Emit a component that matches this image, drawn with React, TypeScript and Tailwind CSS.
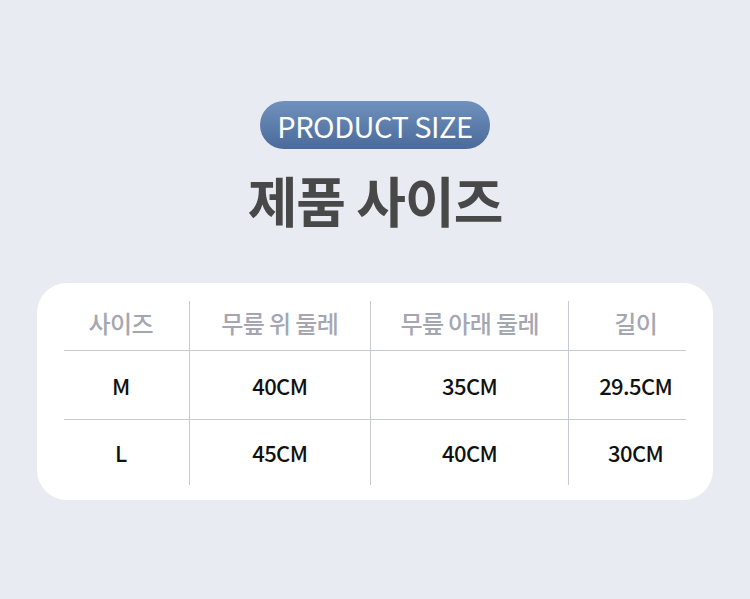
import React from 'react';

const rows = [
  ['M', '40CM', '35CM', '29.5CM'],
  ['L', '45CM', '40CM', '30CM'],
];

const headers = ['사이즈', '무릎 위 둘레', '무릎 아래 둘레', '길이'];

// column widths follow the divider positions in the design
const colClass = ['w-[125px] pr-[11px]', 'w-[182px]', 'w-[199px]', 'w-[118px] pl-[16px]'];

const App: React.FC = () => {
  return (
    <div
      className="w-[750px] h-[599px] bg-[#e9ebf2] flex flex-col items-center pt-[101px]"
      style={{ fontFamily: '"Noto Sans CJK KR", "Noto Sans", sans-serif' }}
    >
      <div className="h-[48px] w-[230px] rounded-full bg-gradient-to-b from-[#7191bd] to-[#4a6a9a] flex items-center justify-center">
        <span className="text-white text-[29px] leading-none tracking-[-0.5px]">PRODUCT SIZE</span>
      </div>

      <h1 className="mt-[19px] text-[54px] leading-[64px] font-bold text-[#484848] tracking-[-1px]">제품 사이즈</h1>

      <div className="mt-[51px] w-[676px] h-[217px] bg-white rounded-[30px] px-[27px] pt-[18px]">
        <div className="flex h-[50px] border-b border-[#c7c9d4]">
          {headers.map((h, i) => (
            <div
              key={h}
              className={`${colClass[i]} flex items-center justify-center text-[24px] font-medium text-[#a4a7b2] tracking-[-0.6px] ${i > 0 ? 'border-l border-[#c7c9d4]' : ''}`}
            >
              <span className="-mt-[5px]">{h}</span>
            </div>
          ))}
        </div>
        {rows.map((r, ri) => (
          <div
            key={r[0]}
            className={`flex ${ri === 0 ? 'h-[69px] border-b border-[#c7c9d4]' : 'h-[65px]'}`}
          >
            {r.map((c, i) => (
              <div
                key={i}
                className={`${colClass[i]} flex items-center justify-center text-[22px] font-medium text-[#111] tracking-[-0.6px] ${i > 0 ? 'border-l border-[#c7c9d4]' : ''}`}
              >
                {c}
              </div>
            ))}
          </div>
        ))}
      </div>
    </div>
  );
};

export default App;
